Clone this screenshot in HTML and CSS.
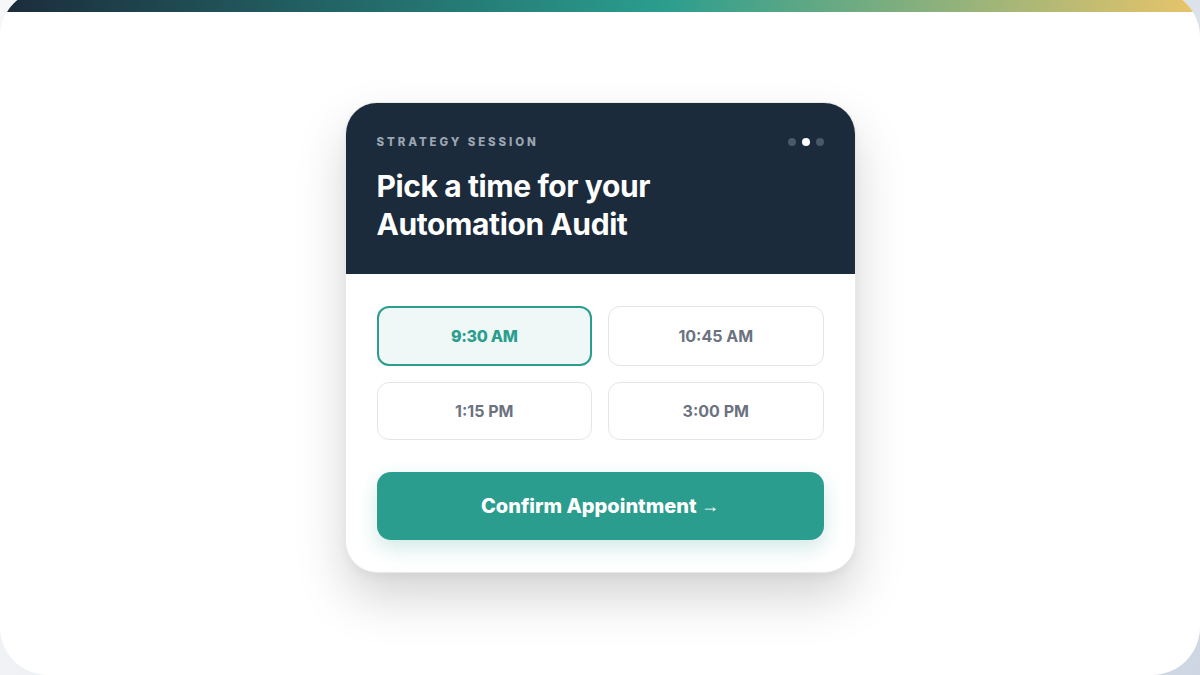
FILE: index.html
```html
<!DOCTYPE html>
<html lang="en">
<head>
<meta charset="utf-8">
<title>Strategy Session</title>
<link rel="stylesheet" href="styles.css">
</head>
<body>
<div class="frame">
  <div class="topbar"></div>
  <main class="stage">
    <section class="card">
      <header class="card-head">
        <div class="head-row">
          <span class="eyebrow">STRATEGY SESSION</span>
          <span class="dots"><i class="dot"></i><i class="dot active"></i><i class="dot"></i></span>
        </div>
        <h1 class="title">Pick a time for your<br>Automation Audit</h1>
      </header>
      <div class="card-body">
        <div class="slots">
          <button class="slot selected">9:30 AM</button>
          <button class="slot">10:45 AM</button>
          <button class="slot">1:15 PM</button>
          <button class="slot">3:00 PM</button>
        </div>
        <button class="confirm">Confirm Appointment <span class="arrow">→</span></button>
      </div>
    </section>
  </main>
</div>
</body>
</html>
```
FILE: styles.css
```css
* { box-sizing: border-box; }
html, body { margin: 0; padding: 0; }
body {
  width: 1200px;
  height: 675px;
  overflow: hidden;
  background: linear-gradient(120deg, #f6f7f9 0%, #e6eaf0 60%, #cdd6e2 100%);
  font-family: Inter, "Noto Sans", sans-serif;
}
.frame {
  width: 1200px;
  height: 686px;
  margin-top: -11px;
  background: #ffffff;
  border-radius: 48px;
  overflow: hidden;
  display: flex;
  flex-direction: column;
}
.topbar {
  height: 23px;
  flex: none;
  background: linear-gradient(90deg, #1b2b3c 0%, #2a9d8f 55%, #e9c46a 100%);
}
.stage {
  flex: 1;
  display: flex;
  align-items: center;
  justify-content: center;
  padding-bottom: 13px;
}
.card {
  width: 511px;
  border-radius: 32px;
  background: #fff;
  overflow: hidden;
  border: 1px solid #e8e8e8;
  box-shadow: 0 25px 50px rgba(0, 0, 0, 0.17), 0 4px 10px rgba(0, 0, 0, 0.04);
}
.card-head {
  background: #1b2b3c;
  padding: 32px 31px 31px 31px;
}
.head-row {
  display: flex;
  align-items: center;
  justify-content: space-between;
  height: 14px;
}
.eyebrow {
  font-size: 11.5px;
  font-weight: 800;
  letter-spacing: 2.9px;
  color: #9ba6b2;
}
.dots { display: flex; gap: 6px; }
.dot {
  width: 8px;
  height: 8px;
  border-radius: 50%;
  background: #4a5868;
}
.dot.active { background: #ffffff; }
.title {
  margin: 18px 0 0 0;
  font-size: 30px;
  line-height: 38px;
  font-weight: 700;
  letter-spacing: -0.4px;
  color: #ffffff;
}
.card-body {
  padding: 32px 31px 32px 31px;
}
.slots {
  display: grid;
  grid-template-columns: 1fr 1fr;
  gap: 16px;
}
.slot {
  font-family: Inter, "Noto Sans", sans-serif;
  padding: 19px 0;
  line-height: 18px;
  font-size: 16px;
  font-weight: 700;
  color: #6b7280;
  background: #ffffff;
  border: 1px solid #e3e5e8;
  border-radius: 12px;
}
.slot.selected {
  border: 2px solid #2a9d8f;
  background: #eff8f6;
  color: #2a9d8f;
  font-weight: 800;
  letter-spacing: -0.3px;
}
.confirm {
  display: block;
  width: 100%;
  margin-top: 32px;
  height: 68px;
  border: none;
  border-radius: 14px;
  background: #2a9d8f;
  color: #ffffff;
  font-family: Inter, "Noto Sans", sans-serif;
  font-size: 20px;
  font-weight: 800;
  box-shadow: 0 8px 20px rgba(42, 157, 143, 0.22);
}
.arrow {
  font-family: "Liberation Sans", sans-serif;
  font-weight: 400;
  font-size: 18px;
  position: relative;
  top: -1px;
}
```
